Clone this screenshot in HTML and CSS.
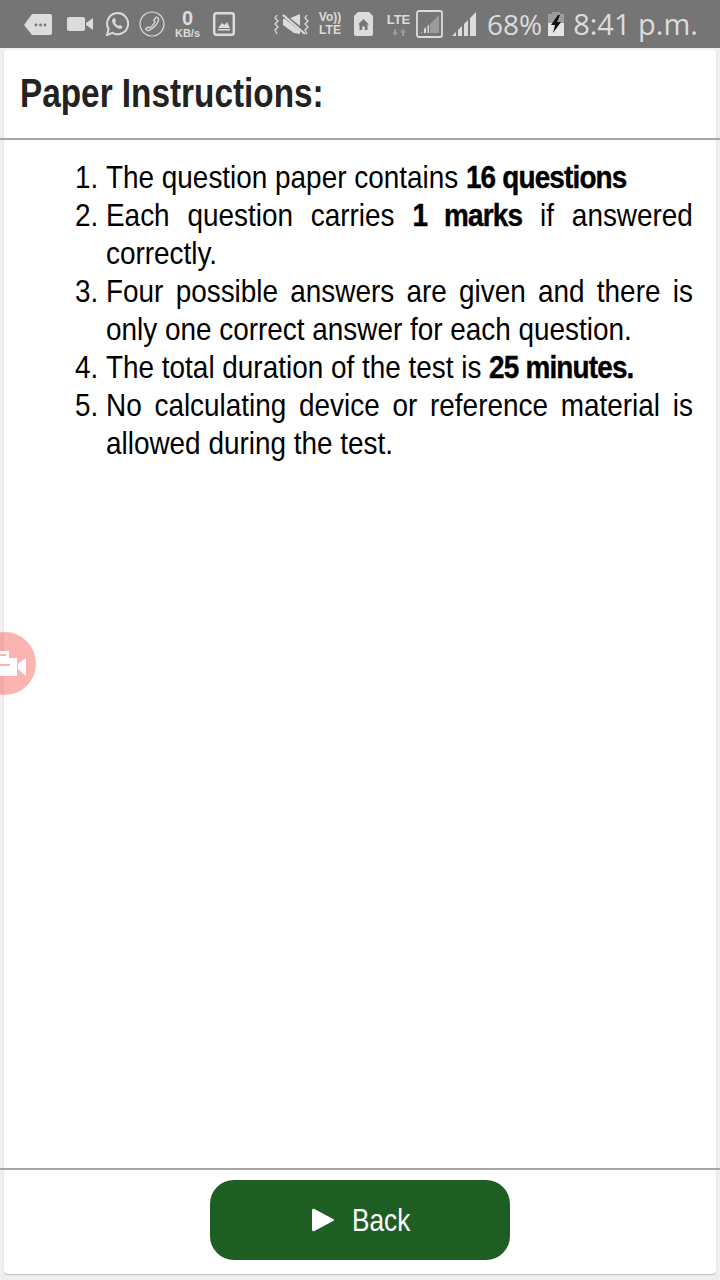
FILE: index.html

```html
<!DOCTYPE html>
<html lang="en">

<head>
  <meta charset="UTF-8">
  <title>Paper Instructions</title>
  <link rel="stylesheet" href="styles.css">
</head>

<body>
  <div class="status-bar">
    <svg class="ic ic-msg" viewBox="0 0 28 21"><path d="M8 0H26a2 2 0 0 1 2 2V19a2 2 0 0 1-2 2H8L0 11z" fill="#dcdcdc"/><circle cx="12" cy="11" r="1.4" fill="#757575"/><circle cx="16.500" cy="11" r="1.400" fill="#757575"/><circle cx="21" cy="11" r="1.400" fill="#757575"/></svg>
    <svg class="ic ic-cam" viewBox="0 0 26 14"><rect width="18" height="14" rx="2" fill="#dcdcdc"/><path d="M19 6 26 1V13L19 8z" fill="#dcdcdc"/></svg>
    <svg class="ic ic-wa" viewBox="0 0 24 24"><path d="M2 23 3.600 17A10.500 10.500 0 1 1 7.500 20.800z" fill="none" stroke="#dcdcdc" stroke-width="2"/><path d="M8 6.500C6.500 8 7 11 9.500 13.800S15 17.500 16.800 16.200L17.500 14.500 14.800 13 13.500 14C12 13.500 10.500 11.800 10 10.300L11 9 9.800 6.300z" fill="#dcdcdc"/></svg>
    <svg class="ic ic-call" viewBox="0 0 26 26"><circle cx="13" cy="13" r="12" fill="none" stroke="#dcdcdc" stroke-width="1.200"/><path d="M17.500 6C19.500 7 20 8 19.500 9.500 18 13.500 14 17.500 10 19.500 8.500 20 7.500 19.500 6.800 17.800L9 16 10.800 17C13 15.500 15 13 16 10.800L14.800 9z" fill="none" stroke="#dcdcdc" stroke-width="1.300"/></svg>
    <div class="speed"><span class="speed-num">0</span><span class="speed-unit">KB/s</span></div>
    <svg class="ic ic-pic" viewBox="0 0 22 24"><rect x="1.200" y="1.200" width="19.600" height="21.600" rx="2" fill="none" stroke="#dcdcdc" stroke-width="2.400"/><path d="M5 16 9 11 11.500 13 14 10 17 16z" fill="#dcdcdc"/><rect x="5" y="17" width="12" height="1.500" fill="#dcdcdc"/></svg>
    <svg class="ic ic-mute" viewBox="0 0 36 21"><path d="M9 5H14L26 0V20L20 19 9 11z" fill="#dcdcdc"/><path d="M8 0 33 20" stroke="#757575" stroke-width="4"/><path d="M9 1 31 20" stroke="#dcdcdc" stroke-width="2.200"/><path d="M3 1 1 4 4 7 1 10 4 13 1 16 3 20M33 1 31 4 34 7 31 10 34 13 31 16 33 20" fill="none" stroke="#dcdcdc" stroke-width="1.300"/></svg>
    <div class="volte"><span>Vo))</span><span>LTE</span></div>
    <svg class="ic ic-home" viewBox="0 0 19 24"><path d="M4 0H15L19 4V22a2 2 0 0 1-2 2H2a2 2 0 0 1-2-2V4z" fill="#dcdcdc"/><path d="M9.500 7 15 12.500H13.500V18H10.800V14.500H8.200V18H5.500V12.500H4z" fill="#757575"/></svg>
    <div class="lte"><span>LTE</span><svg viewBox="0 0 14 7"><path d="M3 7 0 3.500H2V0H4V3.500H6zM11 0 14 3.500H12V7H10V3.500H8z" fill="#9c9c9c"/></svg></div>
    <svg class="ic ic-box" viewBox="0 0 27 28"><rect x="1" y="1" width="25" height="26" rx="2" fill="none" stroke="#dcdcdc" stroke-width="1.800"/><path d="M14 23V14L23 5V23z" fill="#9c9c9c"/><path d="M5 23 6 21V23zM8 23V19L10 17V23zM11.500 23V16L13 14.500V23z" fill="#dcdcdc"/></svg>
    <svg class="ic ic-signal" viewBox="0 0 24 24"><path d="M0 24 4 20V24zM6 24V18L10 14V24zM12 24V12L16 8V24zM18 24V6L24 0V24z" fill="#dcdcdc"/></svg>
    <span class="pct">68%</span>
    <svg class="ic ic-batt" viewBox="0 0 16 24"><path d="M4 0H12V2H16V11H0V2H4z" fill="#9c9c9c"/><rect y="11" width="16" height="13" fill="#e6e6e6"/><path d="M10 3 3 13H7L5 21 13 10H9L12 3z" fill="#111"/></svg>
    <span class="time">8:41 p.m.</span>
  </div>

  <div class="card">
    <div class="card-head">
      <h1>Paper Instructions:</h1>
    </div>
    <div class="card-body">
      <ol class="rules">
        <li>The question paper contains <b>16 questions</b></li>
        <li>Each question carries <b>1 marks</b> if answered correctly.</li>
        <li>Four possible answers are given and there is only one correct answer for each question.</li>
        <li>The total duration of the test is <b>25 minutes.</b></li>
        <li>No calculating device or reference material is allowed during the test.</li>
      </ol>
    </div>
    <div class="card-foot">
      <button class="back-btn" type="button">
        <svg class="play" viewBox="0 0 24 24"><path d="M1 2.500Q1 0 3.500 1L23 11.500V12.500L3.500 23Q1 24 1 21.500z" fill="#fff"/></svg>
        <span class="back-label">Back</span>
      </button>
    </div>
  </div>

  <div class="rec-btn">
    <svg viewBox="0 0 26 26"><path d="M0 0H9V7H17V25H0z" fill="#fff"/><path d="M0 3H6V5H0zM0 13H10V15H0z" fill="#fbb4af"/><path d="M18 13 26 7V25L18 18z" fill="#fff"/></svg>
  </div>
</body>

</html>
```

FILE: styles.css

```css
body {
  margin: 0;
  height: 1280px;
  position: relative;
  overflow: hidden;
  background: #efefef;
  font-family: 'Liberation Sans', sans-serif;
  color: #000;
}

.status-bar {
  height: 48px;
  display: flex;
  align-items: center;
  padding-left: 24px;
  background: #757575;
  color: #dcdcdc;
  font-family: 'Open Sans', sans-serif;
}

.ic {
  flex: none;
  display: block;
}

.ic-msg { width: 28px; height: 21px; }
.ic-cam { width: 26px; height: 14px; margin-left: 15px; }
.ic-wa { width: 24px; height: 24px; margin-left: 12px; }
.ic-call { width: 26px; height: 26px; margin-left: 10px; }
.ic-pic { width: 22px; height: 24px; margin-left: 11px; }
.ic-mute { width: 36px; height: 21px; margin-left: 39px; }
.ic-home { width: 19px; height: 24px; margin-left: 12px; }
.ic-box { width: 27px; height: 28px; margin-left: 5px; }
.ic-signal { width: 24px; height: 24px; margin-left: 9px; }
.ic-batt { width: 16px; height: 24px; margin-left: 6px; }

.speed {
  width: 29px;
  margin-left: 8px;
  display: flex;
  flex-direction: column;
  align-items: center;
  font-weight: bold;
  font-family: 'Liberation Sans', sans-serif;
}

.speed-num {
  font-size: 20px;
  line-height: 18px;
}

.speed-unit {
  font-size: 11px;
  line-height: 12px;
}

.volte {
  width: 24px;
  margin-left: 8px;
  display: flex;
  flex-direction: column;
  align-items: center;
  font-family: 'Liberation Sans', sans-serif;
  font-weight: bold;
  font-size: 12px;
  line-height: 13px;
}

.lte {
  width: 25px;
  margin-left: 13px;
  display: flex;
  flex-direction: column;
  align-items: center;
  font-family: 'Liberation Sans', sans-serif;
  font-weight: bold;
  font-size: 13px;
  line-height: 14px;
}

.lte svg {
  width: 14px;
  height: 7px;
  margin-top: 2px;
}

.pct {
  margin-left: 11px;
  font-size: 28px;
  line-height: 48px;
}

.time {
  margin-left: 9px;
  font-size: 29px;
  line-height: 48px;
}

.card {
  width: 712px;
  height: 1224px;
  margin: 2px 0 0 4px;
  display: flex;
  flex-direction: column;
  background: #fff;
  border-radius: 4px;
  box-shadow: 0 1px 1px #bbb;
}

.card-head {
  height: 87px;
  padding-bottom: 1px;
  display: flex;
  align-items: center;
  padding-left: 20px;
  margin: 0 -4px;
  border-bottom: 2px solid #a6a6a6;
}

/* no narrow font installed, so squeeze the Arial widths */
h1 {
  margin: 0;
  font-size: 40px;
  font-weight: bold;
  color: #222;
  white-space: nowrap;
  transform: scaleX(.833);
  transform-origin: left;
}

.card-body {
  flex: 1;
  padding: 18px 23px 0 102px;
}

.rules {
  width: 673px;
  margin: 0;
  padding: 0;
  font-size: 32px;
  line-height: 38px;
  text-align: justify;
  transform: scaleX(.872);
  transform-origin: left;
}

.rules b {
  letter-spacing: -.95px;
  -webkit-text-stroke: .4px #000;
}

.card-foot {
  height: 106px;
  display: flex;
  justify-content: center;
  align-items: flex-start;
  padding-top: 10px;
  box-sizing: border-box;
  border-top: 2px solid #a6a6a6;
  margin: 0 -4px;
}

.back-btn {
  width: 300px;
  height: 80px;
  display: flex;
  align-items: center;
  justify-content: center;
  gap: 17px;
  padding: 0;
  border: none;
  border-radius: 24px;
  background: #1e5e22;
  color: #fff;
  font-family: inherit;
  font-size: 32px;
}

.play {
  width: 24px;
  height: 24px;
}

.back-label {
  width: 58px;
  white-space: nowrap;
  text-align: left;
  transform: scaleX(.82);
  transform-origin: left;
}

.rec-btn {
  position: absolute;
  left: -26px;
  top: 632px;
  width: 62px;
  height: 63px;
  display: flex;
  align-items: center;
  justify-content: flex-end;
  border-radius: 50%;
  background: rgba(244, 67, 54, .4);
}

.rec-btn svg {
  width: 26px;
  height: 26px;
  margin-right: 10px;
}
```
